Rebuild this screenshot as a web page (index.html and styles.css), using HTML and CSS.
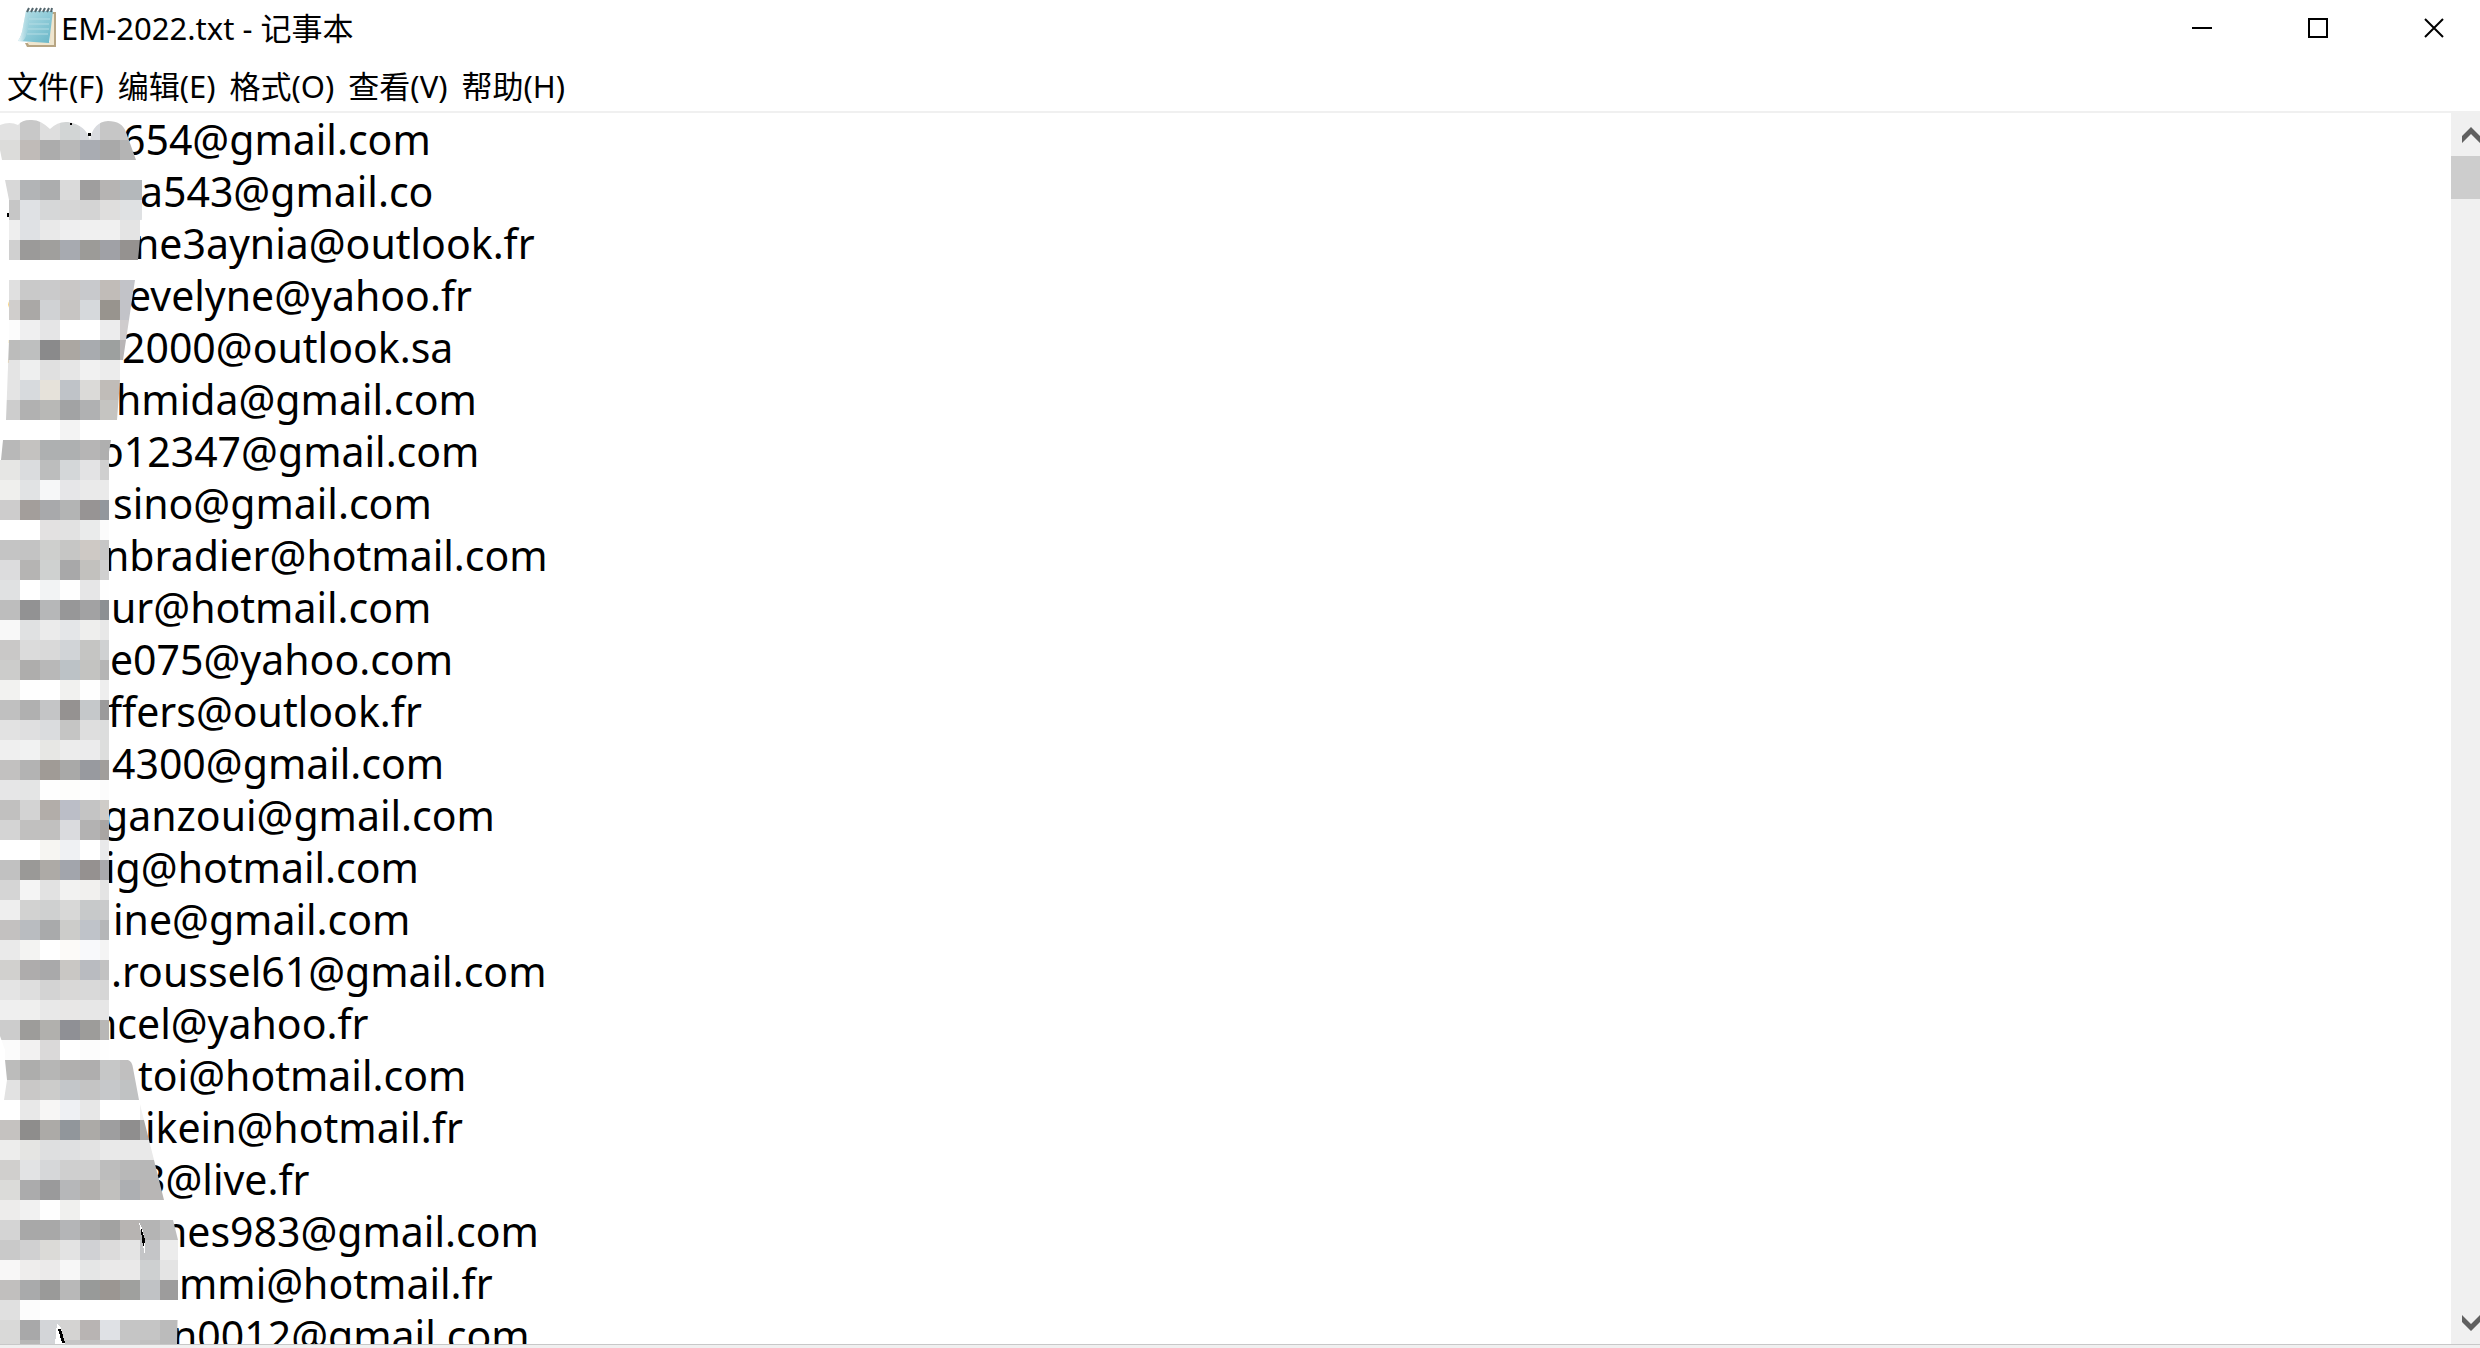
FILE: index.html
```html
<!DOCTYPE html>
<html lang="zh-CN">
<head>
  <meta charset="UTF-8" />
  <meta name="viewport" content="width=device-width, initial-scale=1.0"/>
  <title>EM-2022.txt - 记事本</title>
  <link rel="stylesheet" href="styles.css">
</head>
<body>
  <header class="title-bar">
    <svg class="app-icon" viewBox="0 0 42 42" aria-hidden="true">
      <defs>
        <linearGradient id="paper" x1="0" y1="0" x2="1" y2="1">
          <stop offset="0" stop-color="#b9dfe6"/>
          <stop offset="0.5" stop-color="#8fcbd8"/>
          <stop offset="1" stop-color="#66b5c6"/>
        </linearGradient>
        <linearGradient id="fold" x1="0" y1="0" x2="1" y2="0">
          <stop offset="0" stop-color="#f4fafb"/>
          <stop offset="1" stop-color="#a5d5df" stop-opacity="0"/>
        </linearGradient>
      </defs>
      <path d="M36 5H40V40H11L9 36H34Z" fill="#b7a583"/>
      <path d="M35 7H38V38H13L11 35H34Z" fill="#efe6cf"/>
      <path d="M10 4H37L35 20L33 36L2 34Q6 28 7 20Z" fill="url(#paper)"/>
      <path d="M2 34Q6 28 7 20L10 4H15L12 22Q10 31 7 34Z" fill="url(#fold)"/>
      <path d="M13 12H34M13 17H33M12 22H33M11 27H32" stroke="#b4dce4" stroke-width="1"/>
      <path d="M11 5L13 1M15 5L17 1M19 5L21 1M23 5L25 1M27 5L29 1M31 5L33 1M35 5L36 1" stroke="#53666d" stroke-width="2"/>
    </svg>
    <h1>EM-2022.txt - 记事本</h1>
    <div class="window-buttons">
      <button type="button" aria-label="最小化"><svg viewBox="0 0 20 20"><path d="M0 10H20"/></svg></button>
      <button type="button" aria-label="最大化"><svg viewBox="0 0 20 20"><path d="M1 1H19V19H1Z"/></svg></button>
      <button type="button" aria-label="关闭"><svg viewBox="0 0 20 20"><path d="M1 1L19 19M19 1L1 19"/></svg></button>
    </div>
  </header>

  <nav class="menu-bar">
    <button type="button">文件(F)</button>
    <button type="button">编辑(E)</button>
    <button type="button">格式(O)</button>
    <button type="button">查看(V)</button>
    <button type="button">帮助(H)</button>
  </nav>

  <main class="editor">
    <div class="text-area">
      <div id="lines" class="lines" role="textbox" aria-multiline="true" aria-label="EM-2022.txt" contenteditable="true" spellcheck="false"></div>
      <svg id="mosaic" class="mosaic" viewBox="0 113 180 1240" shape-rendering="crispEdges" aria-hidden="true">
        <defs>
          <clipPath id="brush">
            <path d="M0 125Q10 121 18 125Q22 120 30 120Q40 119 50 129Q58 121 68 122Q86 125 90 140Q93 122 108 121Q122 121 126 132L136 160H2L0 150Z"/>
            <path d="M5 180H142V218L138 260H9V200Z"/>
            <path d="M9 280H135L120 380L117 420H6L9 340Z"/>
            <path d="M60 420H80V440H111L109 452V1060H128Q132 1061 133 1068L139 1100L164 1200L173 1220L178 1240V1300L177 1345H0V1100H4L7 1080L5 1060V1050L0 1036V460L1 460L3 440H60Z"/>
          </clipPath>
        </defs>
      </svg>
    </div>
    <div class="scroll-bar">
      <button type="button" aria-label="向上"><svg viewBox="0 0 18 18"><path d="M0 10L9 1L18 10V17L9 8L0 17Z"/></svg></button>
      <div class="thumb"></div>
      <button type="button" class="down" aria-label="向下"><svg viewBox="0 0 18 18"><path d="M0 1L9 10L18 1V8L9 17L0 8Z"/></svg></button>
    </div>
  </main>
  <footer class="bottom-edge"></footer>

  <script src="script.js"></script>
</body>
</html>
```
FILE: styles.css
```css
    * {
      box-sizing: border-box;
    }

    body {
      font-family: "Noto Sans", "Noto Sans CJK SC", sans-serif;
      margin: 0;
      height: 100vh;
      display: flex;
      flex-direction: column;
      overflow: hidden;
      background-color: #fff;
      color: #000;
    }

    button {
      border: none;
      padding: 0;
      background: none;
      font: inherit;
      color: inherit;
    }

    .title-bar {
      display: flex;
      align-items: center;
      height: 56px;
      padding-left: 16px;
    }

    .app-icon {
      width: 42px;
      height: 42px;
    }

    .title-bar h1 {
      margin: 0 auto 0 3px;
      font-size: 31px;
      font-weight: normal;
      line-height: 56px;
    }

    .window-buttons {
      display: flex;
      gap: 24px;
    }

    .window-buttons button {
      display: flex;
      align-items: center;
      justify-content: center;
      width: 92px;
      height: 56px;
    }

    .window-buttons svg {
      width: 20px;
      height: 20px;
      fill: none;
      stroke: #000;
      stroke-width: 2;
    }

    .menu-bar {
      display: flex;
      gap: 14px;
      height: 57px;
      padding: 4px 0 0 7px;
      border-bottom: 2px solid #f0f0f0;
      font-size: 31px;
      line-height: 50px;
    }

    .editor {
      flex: 1;
      display: flex;
      min-height: 0;
    }

    .text-area {
      position: relative;
      flex: 1;
      overflow: hidden;
    }

    .lines {
      padding-left: 7px;
      font-size: 41px;
      line-height: 52px;
      white-space: nowrap;
      outline: none;
    }

    .hidden-part {
      display: inline-block;
    }

    .mosaic {
      position: absolute;
      left: 0;
      top: 0;
      width: 180px;
      height: 1240px;
      pointer-events: none;
    }

    .scroll-bar {
      display: flex;
      flex-direction: column;
      width: 29px;
      background-color: #f0f0f0;
    }

    .scroll-bar button {
      height: 43px;
      padding-left: 11px;
      overflow: hidden;
      text-align: left;
    }

    .scroll-bar svg {
      display: block;
      width: 18px;
      height: 18px;
      fill: #606060;
    }

    .scroll-bar .down {
      margin-top: auto;
    }

    .thumb {
      height: 43px;
      background-color: #cdcdcd;
    }

    .bottom-edge {
      height: 4px;
      border-top: 1px solid #c8c8c8;
      background-color: #f0f0f0;
    }
```
FILE: script.js
```js
// width of the covered part, readable part, first letter if it sticks out
const lines = [
  [115, '654@gmail.com'],
  [133, 'a543@gmail.co'],
  [127, 'ne3aynia@outlook.fr'],
  [121, 'evelyne@yahoo.fr', 'a'],
  [115, '2000@outlook.sa', 'z'],
  [109, 'hmida@gmail.com'],
  [92, 'o12347@gmail.com'],
  [106, 'sino@gmail.com'],
  [97, 'nbradier@hotmail.com'],
  [104, 'ur@hotmail.com'],
  [103, 'e075@yahoo.com'],
  [101, 'ffers@outlook.fr'],
  [105, '4300@gmail.com'],
  [96, 'ganzoui@gmail.com'],
  [98, 'ig@hotmail.com'],
  [106, 'ine@gmail.com'],
  [104, '.roussel61@gmail.com'],
  [85, 'ncel@yahoo.fr'],
  [131, 'toi@hotmail.com'],
  [138, 'ikein@hotmail.fr'],
  [135, '3@live.fr'],
  [155, 'nes983@gmail.com'],
  [172, 'mmi@hotmail.fr'],
  [165, 'n0012@gmail.com']
];

const linesBox = document.getElementById('lines');
lines.forEach(([width, text, first]) => {
  const row = document.createElement('div');
  const hidden = document.createElement('span');
  hidden.className = 'hidden-part';
  hidden.style.width = `${width}px`;
  hidden.textContent = first || '';
  row.append(hidden, text);
  linesBox.appendChild(row);
});

// 20px tiles from y = 120 down, two digits are a plain grey
const tiles = `
e2 c8 de d2d5d5 d8dade c6 c8
dcdcda c0bbb8 ac b8 a9acb2 a9 b4
ff ff ff ff ff ff ff
d8 b2b4b6 acadae da 9f9e9e b6b4b3 b4b8bb b4b8bb
c6 dfe1e4 d6d7d8 d6 d4 dfdedd dfe1e3 dfe1e3
ee dfe1e4 e9 eeeeef f0 f0 e4
d0 9b9a99 a09f9d a7aab0 9c9b98 a0a1a6 959290
ff ff ff ff ff ff ff
e0 c9 cacacb c9c7c6 c8c9cc c1bcb8 c2c3c8
d0cecc aaa8a6 d0d2d4 c7c5c3 d6d9dc 98948e c2c3c8
fc efeff0 e5e5e6 ff ff ececed cfcccd
bcbcbb bebfbf 8a8a8b aba7a2 a8abaf 9da09f b8b5b6
e4 eeefef e0 e6 f1 ec ff
e4 d7dadd e6e2da bfc3c8 dbdad8 c0bcb8
cd b1 b8b8b6 a2a3a4 b0b1b2 c5c4c1
ff ff ff f3 ff ff
b8 c4c2c0 aeb0b1 aeb0b1 b6b5b5 af
e6e6e4 dadcde bcbdbd d4d7d9 e3e3e4 cf
efefed e1e3e4 f6f7f8 e6e6e8 ea ea
cdcccc a39e9b a8a9ab b3b4b4 979494 92979d
ff ff e3e1e1 e2 eaebeb fb
c4 c3 cecfcd c6c6c5 cec9c5 c6
dcdcdd b5b4b3 cfd1d0 a8a8a9 c2c1be d0
e0e1e2 ff f2f3f4 fe e6e6e7 fe
bd 929293 b6b7b8 979798 a2a2a3 8c9093
f8 e0e1e2 eb e4e6e8 eeeeed e8
c9c8c7 db d9 d1d4d7 c5c5c3 cfd1d2
cccccb aeadac b8 bcc2c6 c3c3c1 b5
f2f2f0 fe ff f1f1ef fe ee
c0 b0 c4c5c6 959291 c5c8ca 9b9a9b
e2 dfdfe0 dadcde c5c5c4 de dcdddd
ef f1f2f2 e7e7e4 ec ebebec dddedd
c2c1c0 b3 a09b96 a9a9a8 989a9f a19e9b
e6e6e7 e4e5e5 fe fdfdfb fe fc
c1c0bf d3 b2ada9 bbbec7 c4 cfccc8
d4 c1c0bf c1c0bf dadbde b3b2b2 a9a5a3
ff ff f6f5f2 eff1f3 ff e9e9ea
c1 9a9997 adaaa6 a2a5ac 959190 a8a8ac
d5 f4 e2 f2f2f1 f1f0ee e4
ee d2d2d1 cfd0d0 d8d8d7 c7c9ca c9cacb
c3c1c0 b9bcc0 a9aaab ccccca bfc3c9 b5b6b8
ea f3f3f2 ff fcfaf8 f8f9fb f4
d1d0ce aeacac a9a9aa c9c7c4 b9bbc0 c2
e4 de d3 d9d8d7 d9 d6
ef efefee e8 e8e7e6 e7 e6
cc 9d9c9a b1b0ad 8f9095 9d9c9a b8b7b6
fb f2f1f1 dad9d9 ff fc fe
bcbcbb adadac b6b6b5 b0afae afaeae c6c7c7 c0bfbf
e2 c9c8c7 cccccb c3c6c9 c4 c6c8ca c0c2c3
ff e8 f7f6f5 eef0f3 e7 ff ff f0
c5c2c0 8e8d8c acaaa7 91969b acaaa7 9e9e9f 8f8e8e aa
ededec e5e5e3 dedfe0 dfe0e1 e3 e9 e9 e9
d0cfcd e2e3e4 d6d7d9 cf cf bd b8 b7
dbdbd9 ababac 9a9a9b b6b7b9 b2b0ae c1c0be adafb2 b8b6b5 b8b6b5
edeceb f1 fe f0f0ee ff ff ff ff ff
d4 a8 a8 b4b5b7 a9 a2a2a1 b7b4b2 b4 bf
c9 d0d0d1 dbdad7 e3 d0d1d4 dcdbdb e4 c4c5c7 ec
f8f7f7 eeedec ebeaea f7 e5e6e6 eae9e9 eae9e9 ced0d1 e4
c1bfbe a9aaab 9a9a99 b8 989a99 9b9692 9fa09e c0c2c5 9d9c9c
e0 fc ff ff ff ff ff ff ff
d9d9d8 a8a8a9 d3d5d8 d4d3d2 b8b4b3 dfe1e5 c5 c5 bb
d9d9d8 b7b7b6 d3d5d8 c5 c0 c5 c5 c0 bb`;

const mosaic = document.getElementById('mosaic');
const svgNS = 'http://www.w3.org/2000/svg';

function addShape(parent, name, attrs) {
  const shape = document.createElementNS(svgNS, name);
  for (const key in attrs) {
    shape.setAttribute(key, attrs[key]);
  }
  parent.appendChild(shape);
  return shape;
}

const group = addShape(mosaic, 'g', { 'clip-path': 'url(#brush)' });
tiles.trim().split('\n').forEach((row, r) => {
  row.split(' ').forEach((color, c) => {
    const fill = color.length === 2 ? color.repeat(3) : color;
    addShape(group, 'rect', { x: c * 20, y: 120 + r * 20, width: 20, height: 20, fill: `#${fill}` });
  });
});

// gaps the brush left open
addShape(mosaic, 'path', { d: 'M139 1222L142 1228L145 1240V1255L143 1245L141 1232Z', fill: '#fff' });
addShape(mosaic, 'path', { d: 'M141 1227L145 1240L144 1247L142 1242Z', fill: '#000' });
addShape(mosaic, 'path', { d: 'M57 1323L61 1328L65 1345H55Z', fill: '#fff' });
addShape(mosaic, 'path', { d: 'M58 1329H61L65 1343H62Z', fill: '#000' });
addShape(mosaic, 'path', { d: 'M70 123H72V125H70ZM88 133H91V136H88ZM7 213H9V217H7Z', fill: '#000' });
```
